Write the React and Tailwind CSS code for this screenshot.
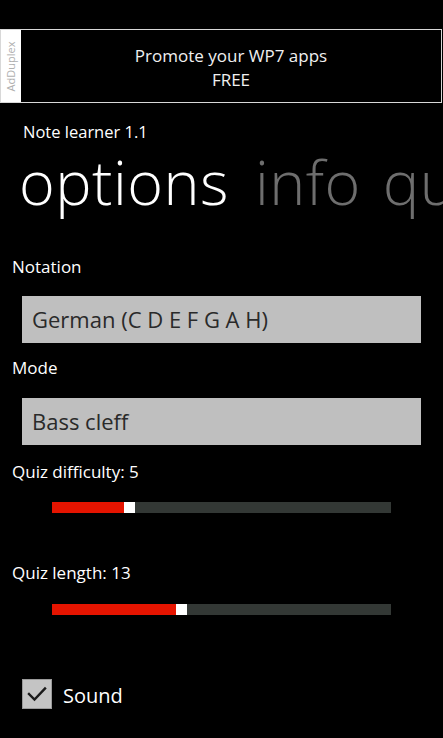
import React from "react";

function Slider({ fill }) {
  return (
    <div className="ml-[52px] flex h-[11px] w-[339px]">
      <div className="h-full bg-[#e51400]" style={{ width: fill }} />
      <div className="h-full w-[11px] bg-white" />
      <div className="h-full flex-1 bg-[#333835]" />
    </div>
  );
}

export default function App() {
  return (
    <div className="relative h-[738px] w-[443px] overflow-hidden bg-black text-white font-['Open_Sans',sans-serif]">
      {/* Ad banner */}
      <div className="mt-[29px] flex h-[74px] w-[442px] border border-[#d8d8d8]">
        <div className="flex w-[20px] items-center justify-center bg-white">
          <span className="-rotate-90 whitespace-nowrap text-[11px] leading-none text-[#b0b0b0]">AdDuplex</span>
        </div>
        <div className="flex flex-1 flex-col items-center justify-center bg-black pt-[4px] text-[17px] leading-[24px] text-[#f0f0f0]">
          <span>Promote your WP7 apps</span>
          <span>FREE</span>
        </div>
      </div>

      {/* App title */}
      <div className="ml-[23px] mt-[22px] text-[16.5px] leading-[14px] text-white">Note learner 1.1</div>

      {/* Pivot header */}
      <div className="ml-[19px] mt-[11px] flex whitespace-nowrap text-[61px] font-light leading-[64px] tracking-[0.5px]">
        <span className="text-white">options</span>
        <span className="ml-[26px] text-[#6e6e6e]">info</span>
        <span className="ml-[22px] text-[#6e6e6e]">quiz</span>
      </div>

      {/* Content */}
      <div className="mt-[43px] flex flex-col">
        <div className="ml-[12px] text-[17px] leading-[20px]">Notation</div>
        <div className="ml-[22px] mt-[19px] flex h-[47px] w-[399px] items-center bg-[#bfbfbf] pl-[10px] text-[22px] text-[#2a2a2a]">
          German (C D E F G A H)
        </div>

        <div className="ml-[12px] mt-[15px] text-[17px] leading-[20px]">Mode</div>
        <div className="ml-[22px] mt-[20px] flex h-[47px] w-[399px] items-center bg-[#bfbfbf] pl-[10px] text-[22px] text-[#2a2a2a]">
          Bass cleff
        </div>

        <div className="ml-[12px] mt-[17px] text-[17px] leading-[20px]">Quiz difficulty: 5</div>
        <div className="mt-[20px]">
          <Slider fill={72} />
        </div>

        <div className="ml-[12px] mt-[50px] text-[17px] leading-[20px]">Quiz length: 13</div>
        <div className="mt-[21px]">
          <Slider fill={124} />
        </div>

        <div className="ml-[22px] mt-[64px] flex items-center">
          <div className="flex h-[30px] w-[30px] items-center justify-center border border-[#9a9a9a] bg-[#c4c4c4]">
            <svg width="20" height="16" viewBox="0 0 20 16" fill="none">
              <path d="M2 8 L7.5 13.5 L18 2.5" stroke="#1a1a1a" strokeWidth="2.4" strokeLinecap="square" />
            </svg>
          </div>
          <span className="ml-[11px] mt-[4px] text-[20px] leading-[24px]">Sound</span>
        </div>
      </div>
    </div>
  );
}
